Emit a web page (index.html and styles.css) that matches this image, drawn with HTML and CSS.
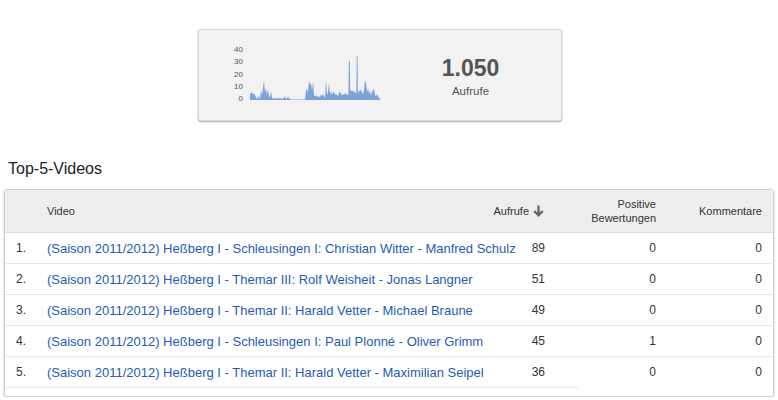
FILE: index.html
```html
<!DOCTYPE html>
<html lang="de">
<head>
<meta charset="utf-8">
<title>Top-5-Videos</title>
<link rel="stylesheet" href="styles.css">
</head>
<body>
<div class="summary">
  <div class="chart">
    <div class="axis">
      <span>40</span><span>30</span><span>20</span><span>10</span><span>0</span>
    </div>
    <svg class="spark" width="130" height="50" viewBox="0 0 130 50">
      <g transform="translate(0,50) scale(1,-1.225)">
        <polygon fill="#7ca3d8" points="0,0 0,5 1,6 2,6 3,5 4,5 5,4 6,2 7,1 8,3 9,2 10,1 11,8 12,4 13,10 14,16 15,6 16,10 17,4 18,9 19,3 20,2 21,7 22,2 23,1 24,1 25,2 26,1 27,1 28,2 29,1 30,2 31,1 32,1 33,1 34,2 35,3 36,1 37,1 38,3 39,1 40,1 41,0.5 55,0.5 56,8 57,9 58,6 59,17 60,12 61,14 62,8 63,15 64,4 65,3 66,3 67,4 68,2 69,3 70,2 71,5 72,3 73,5 74,3 75,2 76,17 77,4 78,6 79,14 80,5 81,7 82,4 83,6 84,7 85,4 86,5 87,4 88,3 89,6 90,7 91,5 92,4 93,5 94,4 95,6 96,5 97,4 98.4,5 98.8,32 99.8,32 100.2,8 101,8 102,7 103,8 104,6 105,7 106.4,5 106.8,36 107.6,36 108,4 109,8 110,7 111,9 112,6 113,5 114,8 115,16 116,14 117,6 118,10 119,5 120,8 121,3 122,7 123,8 124,9 125,4 126,3 127,5 128,3 129,2 130,1 130,0"/>
      </g>
    </svg>
  </div>
  <div class="total">
    <div class="total-value">1.050</div>
    <div class="total-label">Aufrufe</div>
  </div>
</div>

<h2 class="section-title">Top-5-Videos</h2>

<div class="table">
  <div class="head">
    <div class="h-num"></div>
    <div class="h-video">Video</div>
    <div class="h-views">Aufrufe
      <svg class="sort" width="11" height="12" viewBox="0 0 11 12"><path fill="none" stroke="#666" stroke-width="2.3" d="M5.5 0.5 V10 M1.2 6 L5.5 10.3 L9.8 6"/></svg>
    </div>
    <div class="h-likes">Positive<br>Bewertungen</div>
    <div class="h-comments">Kommentare</div>
  </div>
  <div class="row">
    <div class="c-num">1.</div>
    <div class="c-video"><a href="#">(Saison 2011/2012) Heßberg I - Schleusingen I: Christian Witter - Manfred Schulz</a></div>
    <div class="c-val">89</div><div class="c-val">0</div><div class="c-val last">0</div>
  </div>
  <div class="row">
    <div class="c-num">2.</div>
    <div class="c-video"><a href="#">(Saison 2011/2012) Heßberg I - Themar III: Rolf Weisheit - Jonas Langner</a></div>
    <div class="c-val">51</div><div class="c-val">0</div><div class="c-val last">0</div>
  </div>
  <div class="row">
    <div class="c-num">3.</div>
    <div class="c-video"><a href="#">(Saison 2011/2012) Heßberg I - Themar II: Harald Vetter - Michael Braune</a></div>
    <div class="c-val">49</div><div class="c-val">0</div><div class="c-val last">0</div>
  </div>
  <div class="row">
    <div class="c-num">4.</div>
    <div class="c-video"><a href="#">(Saison 2011/2012) Heßberg I - Schleusingen I: Paul Plonné - Oliver Grimm</a></div>
    <div class="c-val">45</div><div class="c-val">1</div><div class="c-val last">0</div>
  </div>
  <div class="row row-last">
    <div class="c-num">5.</div>
    <div class="c-video"><a href="#">(Saison 2011/2012) Heßberg I - Themar II: Harald Vetter - Maximilian Seipel</a></div>
    <div class="c-val">36</div><div class="c-val">0</div><div class="c-val last">0</div>
  </div>
  <div class="rule"></div>
</div>
</body>
</html>
```
FILE: styles.css
```css
* { box-sizing: border-box; }
html, body { margin: 0; padding: 0; background: #fff; }
body {
  font-family: "Liberation Sans", Arial, sans-serif;
  color: #333;
}

/* summary card */
.summary {
  margin: 29px 0 0 198px;
  width: 364px;
  height: 92px;
  background: #f2f2f2;
  border: 1px solid #dadada;
  border-radius: 3px;
  box-shadow: 0 1px 2px rgba(0,0,0,0.35);
  display: flex;
  align-items: flex-start;
}
.chart {
  display: flex;
  align-items: flex-start;
  padding: 16px 0 0 34px;
  gap: 7px;
}
.axis {
  width: 10px;
  display: flex;
  flex-direction: column;
  align-items: flex-end;
  gap: 4.25px;
  font-size: 8px;
  line-height: 8px;
  color: #555;
}
.spark { display: block; margin-top: 4px; }
.total {
  flex: 1;
  text-align: center;
  padding-top: 27px;
  color: #555;
}
.total-value {
  font-size: 23px;
  line-height: 23px;
  font-weight: bold;
}
.total-label {
  margin-top: 5px;
  font-size: 11.5px;
  line-height: 13px;
}

/* heading */
.section-title {
  margin: 39px 0 0 8px;
  font-size: 16px;
  line-height: 18px;
  font-weight: normal;
  color: #222;
}

/* table */
.table {
  margin: 11px 0 0 4px;
  width: 770px;
  border: 1px solid #cfcfcf;
  border-radius: 3px;
  box-shadow: 0 1px 2px rgba(0,0,0,0.3);
  padding-bottom: 8px;
  overflow: hidden;
}
.head {
  display: grid;
  grid-template-columns: 42px 1fr 70px 111px 109px;
  height: 43px;
  background: #eeeeee;
  border-bottom: 1px solid #dedede;
  font-size: 11px;
  line-height: 14px;
  color: #333;
  align-items: center;
}
.h-views, .h-likes { text-align: right; padding-right: 8px; }
.h-views {
  display: flex;
  justify-content: flex-end;
  align-items: center;
  gap: 4px;
  padding-right: 9px;
}
.sort { display: block; }
.h-comments { text-align: right; padding-right: 11px; }

.row {
  display: grid;
  grid-template-columns: 42px 1fr 30px 111px 109px;
  height: 31px;
  border-bottom: 1px solid #e6e6e6;
  align-items: center;
  font-size: 12px;
}
.row-last { border-bottom: none; height: 30px; }
.c-num { padding-left: 11px; color: #333; }
.c-video a { color: #1f5cb6; text-decoration: none; white-space: nowrap; font-size: 13px; }
.c-val { text-align: right; padding-right: 8px; color: #333; }
.c-val.last { padding-right: 11px; }
.rule {
  width: 573px;
  border-top: 1px solid #e6e6e6;
}
```
